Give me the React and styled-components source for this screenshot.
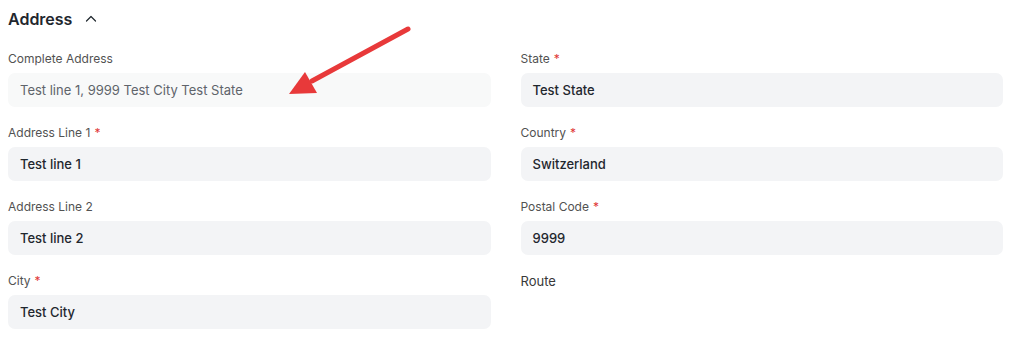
import React from "react";
import styled, { createGlobalStyle } from "styled-components";

const GlobalStyle = createGlobalStyle`
  body {
    margin: 0;
    background: #ffffff;
    font-family: Inter, "Noto Sans", sans-serif;
    color: #1f272e;
  }
`;

const leftFields = [
  { label: "Complete Address", value: "Test line 1, 9999 Test City Test State", readOnly: true },
  { label: "Address Line 1", value: "Test line 1", required: true },
  { label: "Address Line 2", value: "Test line 2" },
  { label: "City", value: "Test City", required: true },
];

const rightFields = [
  { label: "State", value: "Test State", required: true },
  { label: "Country", value: "Switzerland", required: true },
  { label: "Postal Code", value: "9999", required: true },
  { label: "Route" },
];

const App = () => {
  return (
    <Section>
      <GlobalStyle />
      <Header>
        <h2>Address</h2>
        <svg width="12" height="12" viewBox="0 0 12 12" fill="none">
          <path d="M1.5 8L6 3.5L10.5 8" stroke="#1f272e" strokeWidth="1.2" strokeLinecap="round" strokeLinejoin="round" />
        </svg>
      </Header>
      <Columns>
        <Column>
          {leftFields.map((f) => (
            <Field key={f.label} {...f} />
          ))}
        </Column>
        <Column>
          {rightFields.map((f) => (
            <Field key={f.label} {...f} />
          ))}
        </Column>
      </Columns>
      <Arrow width="140" height="90" viewBox="0 0 140 90">
        <line x1="128" y1="7" x2="32" y2="59" stroke="#e8393a" strokeWidth="5" strokeLinecap="round" />
        <polygon points="9,72 25,50 37,71" fill="#e8393a" />
      </Arrow>
    </Section>
  );
};

const Field = ({ label, value, required, readOnly }) => (
  <FieldWrap>
    <Label empty={value === undefined}>
      {label}
      {required && <Star>*</Star>}
    </Label>
    {value !== undefined && <Input readOnly={readOnly}>{value}</Input>}
  </FieldWrap>
);

export default App;

const Section = styled.div`
  position: relative;
  padding: 7px 18px 0 8px;
`;

const Header = styled.div`
  display: flex;
  align-items: center;
  gap: 13px;
  height: 24px;

  h2 {
    margin: 0;
    font-size: 16px;
    font-weight: 600;
    line-height: 24px;
    color: #1f272e;
  }
`;

const Columns = styled.div`
  display: grid;
  grid-template-columns: 1fr 1fr;
  gap: 30px;
  margin-top: 20px;
`;

const Column = styled.div`
  display: flex;
  flex-direction: column;
`;

const FieldWrap = styled.div`
  display: flex;
  flex-direction: column;
  gap: 6px;
  margin-bottom: 18px;
`;

const Label = styled.div`
  font-size: ${(p) => (p.empty ? "13px" : "12px")};
  line-height: 16px;
  color: ${(p) => (p.empty ? "#383838" : "#525252")};
`;

const Star = styled.span`
  color: #e03636;
  margin-left: 4px;
  font-size: 12px;
`;

const Input = styled.div`
  height: 34px;
  box-sizing: border-box;
  display: flex;
  align-items: center;
  padding: 0 12px;
  border-radius: 7px;
  font-size: 13px;
  font-weight: ${(p) => (p.readOnly ? 400 : 500)};
  color: ${(p) => (p.readOnly ? "#5f646b" : "#1f272e")};
  background: ${(p) => (p.readOnly ? "#f8f9f9" : "#f3f4f6")};
`;

const Arrow = styled.svg`
  position: absolute;
  left: 280px;
  top: 22px;
  pointer-events: none;
`;
